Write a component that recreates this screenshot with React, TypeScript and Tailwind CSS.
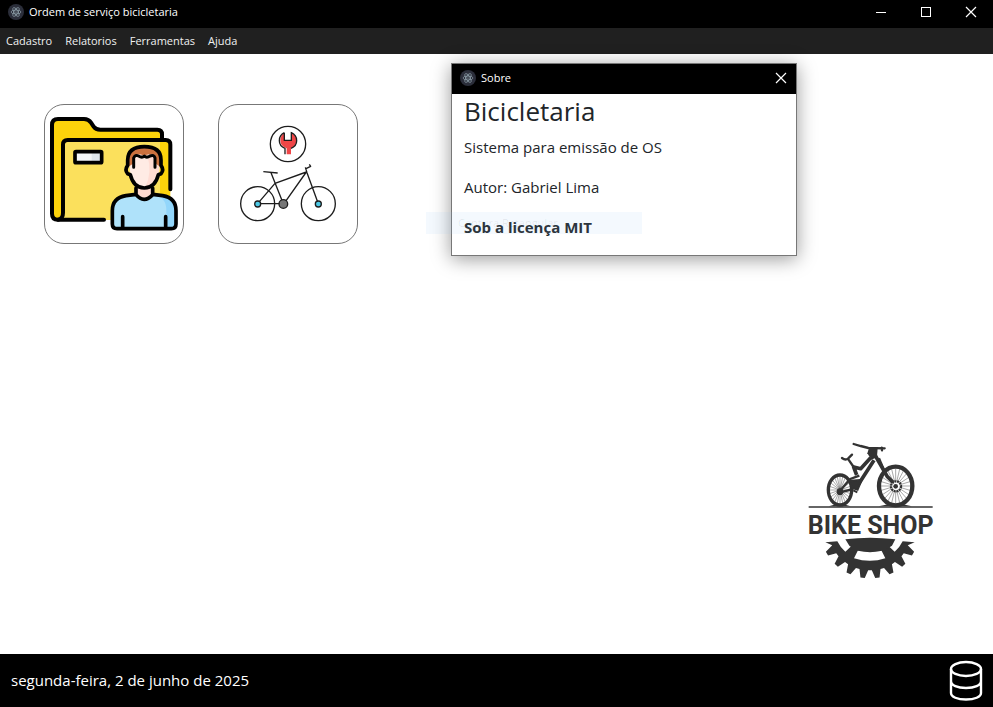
import type { ReactNode } from "react";

const MENU = ["Cadastro", "Relatorios", "Ferramentas", "Ajuda"];

function polar(cx: number, cy: number, r: number, deg: number) {
  const a = (deg * Math.PI) / 180;
  return `${(cx + r * Math.cos(a)).toFixed(1)} ${(cy + r * Math.sin(a)).toFixed(1)}`;
}

function chainringPath() {
  const cx = 210;
  const cy = 280;
  const parts: string[] = ["M76 322", `L${polar(cx, cy, 124, 156)}`];
  for (let i = 0; i < 8; i += 1) {
    const mid = 149.5 - i * 17;
    parts.push(`L${polar(cx, cy, 126, mid + 6)}`);
    parts.push(`L${polar(cx, cy, 150, mid + 2.5)}`);
    parts.push(`L${polar(cx, cy, 150, mid - 2.5)}`);
    parts.push(`L${polar(cx, cy, 126, mid - 6)}`);
  }
  parts.push(`L${polar(cx, cy, 124, 24)}`);
  parts.push("L344 322L308 319Q299 338 284 350L252 320H168L136 350Q121 338 112 319Z");
  return parts.join("");
}

function AppIcon() {
  return (
    <svg viewBox="0 0 16 16" className="size-4 shrink-0" aria-hidden="true">
      <circle cx="8" cy="8" r="8" fill="#2b2e3a" />
      <g fill="none" stroke="#b5cdd6" strokeWidth="0.7" opacity="0.75">
        <ellipse cx="8" cy="8" rx="5" ry="2" />
        <ellipse cx="8" cy="8" rx="5" ry="2" transform="rotate(60 8 8)" />
        <ellipse cx="8" cy="8" rx="5" ry="2" transform="rotate(120 8 8)" />
      </g>
      <circle cx="8" cy="8" r="0.6" fill="#b5cdd6" />
    </svg>
  );
}

function CloseGlyph() {
  return (
    <svg viewBox="0 0 12 12" className="size-3" aria-hidden="true">
      <path d="M1 1 11 11M11 1 1 11" stroke="#fff" strokeWidth="1.2" fill="none" />
    </svg>
  );
}

function WindowButton({ label, children }: { label: string; children: ReactNode }) {
  return (
    <button type="button" aria-label={label} className="flex w-[45px] items-center justify-center">
      {children}
    </button>
  );
}

function CustomersIcon() {
  return (
    <svg viewBox="15 15 414 414" className="size-full" aria-hidden="true">
      <path d="M36 350V75Q36 57 54 57H132Q146 57 153 68L161 80Q167 89 181 89H352Q366 89 366 103V120H378Q391 120 391 134V359H54Q36 359 36 350Z" fill="#fdd30b" />
      <path d="M69 134Q69 120 83 120H360V359H62Q69 350 69 340Z" fill="#fbe05c" />
      <g fill="none" stroke="#000" strokeWidth="12" strokeLinecap="round" strokeLinejoin="round">
        <path d="M192 359H54Q36 359 36 341V75Q36 57 54 57H132Q146 57 153 68L161 80Q167 89 181 89H352Q366 89 366 103V116" />
        <path d="M54 359Q69 357 69 338V134Q69 120 83 120H377Q391 120 391 134V268" />
      </g>
      <rect x="105" y="155" width="80" height="33" rx="2" fill="#f3f6f8" />
      <path d="M155 155H185V188H155Z" fill="#dfe6ec" />
      <rect x="105" y="155" width="80" height="33" rx="3" fill="none" stroke="#000" strokeWidth="11" />
      <path d="M217 384V327Q219 292 260 286L288 282H338L366 286Q406 292 408 327V372Q408 386 394 386H231Q217 386 217 372Z" fill="#afe2fa" />
      <path d="M340 283L366 286Q406 292 408 327V372Q408 386 394 386H379V330Q379 292 340 283Z" fill="#92d6fb" />
      <path d="M288 250V284Q312 310 338 284V250Z" fill="#ffd9cf" />
      <path d="M269 202V170Q280 145 313 143Q352 145 358 175V205Q355 264 313 264Q272 262 269 202Z" fill="#ffebe4" />
      <path d="M322 165Q352 168 358 185V205Q355 258 315 263Q338 220 322 165Z" fill="#ffdcd3" />
      <path d="M263 202V178Q264 141 313 141Q363 141 363 180V202L345 190L343 166Q326 158 312 168Q298 158 285 168L281 190Z" fill="#cb713f" />
      <g fill="none" stroke="#000" strokeWidth="11" strokeLinecap="round" strokeLinejoin="round">
        <path d="M288 264V284Q312 312 338 284V264M288 283L258 287Q217 294 217 332V372Q217 386 231 386H394Q408 386 408 372V332Q408 294 368 287L338 283M248 350V384M377 350V384" />
        <path d="M263 196V180Q264 140 313 140Q363 140 363 180V196M263 196Q253 210 263 221L271 224Q280 263 313 264Q346 263 355 224L363 221Q373 210 363 196" />
      </g>
      <path d="M281 202V174Q285 163 296 168Q306 175 313 168Q320 175 330 168Q342 163 345 174V202" fill="none" stroke="#000" strokeWidth="9" strokeLinecap="round" strokeLinejoin="round" />
    </svg>
  );
}

function ServiceOrderIcon() {
  return (
    <svg viewBox="15 15 414 414" className="size-full" aria-hidden="true">
      <g fill="none" stroke="#1d1d1d" strokeWidth="4">
        <circle cx="222" cy="132" r="53" />
        <circle cx="131" cy="311" r="51" />
        <circle cx="313" cy="311" r="51" />
        <path d="M131 311 183 250 277 216 210 311H131M171 218 208 311M274 202 279 218 313 311M276 206 290 199 286 193M148 215 191 219" strokeLinejoin="round" />
      </g>
      <circle cx="131" cy="312" r="9" fill="#4cc9e6" stroke="#1d1d1d" strokeWidth="4" />
      <circle cx="313" cy="312" r="9" fill="#4cc9e6" stroke="#1d1d1d" strokeWidth="4" />
      <circle cx="208" cy="312" r="13" fill="#777" stroke="#1d1d1d" strokeWidth="4" />
      <path d="M211 98V121H232V98Q247 105 247 122Q247 138 231 145V163H218V145Q199 138 199 122Q199 105 211 98Z" fill="#ef4647" />
      <path d="M211 98V121H232V98Q248 105 248 122Q248 138 231 145M213 163V145Q196 138 196 122Q196 105 211 98" fill="none" stroke="#1d1d1d" strokeWidth="4" />
    </svg>
  );
}

function spokes(cx: number, cy: number, rx: number, ry: number) {
  return Array.from({ length: 24 }, (_, i) => {
    const a = (i * Math.PI) / 12;
    return `M${cx} ${cy}L${(cx + rx * Math.cos(a)).toFixed(1)} ${(cy + ry * Math.sin(a)).toFixed(1)}`;
  }).join("");
}

function ShopLogo() {
  return (
    <svg viewBox="0 0 420 450" className="h-[150px] w-[140px]" role="img" aria-label="Bike Shop">
      <g fill="none" stroke="#333">
        <ellipse cx="120" cy="165" rx="35" ry="45" strokeWidth="10" />
        <ellipse cx="287" cy="153" rx="50" ry="58" strokeWidth="13" />
        <path d={spokes(120, 165, 32, 42)} strokeWidth="1.3" />
        <path d={spokes(287, 153, 46, 52)} strokeWidth="1.3" />
        <path d="M161 27 182 33 205 39 254 40M245 38 246 46" strokeWidth="7" strokeLinecap="round" />
        <path d="M126 69Q136 77 144 71L156 59M145 73 161 96" strokeWidth="7" strokeLinecap="round" strokeLinejoin="round" />
        <path d="M218 48 262 125 287 150" strokeWidth="11" />
        <path d="M236 70 252 108" strokeWidth="9" />
        <path d="M212 68 182 101 161 96 170 120M222 76 174 150" strokeWidth="11" strokeLinejoin="round" />
        <path d="M120 167 151 132 178 122M120 172 160 162" strokeWidth="7" />
        <path d="M153 137 186 134 173 165 154 158Z" fill="#333" strokeWidth="5" />
        <path d="M160 166 172 172" strokeWidth="6" />
      </g>
      <circle cx="288" cy="154" r="15" fill="#fff" stroke="#333" strokeWidth="7" strokeDasharray="6 2" />
      <circle cx="287" cy="154" r="7" fill="#333" />
      <circle cx="120" cy="170" r="10" fill="#333" />
      <path d="M208 36 233 37 231 67 214 74 202 55Z" fill="#333" />
      <path d="M86 214Q120 202 152 214ZM236 214Q287 198 336 214Z" fill="#333" />
      <path d="M26 216H398" stroke="#333" strokeWidth="5" />
      <text x="212" y="296" textAnchor="middle" fontSize="75" fontWeight="700" fill="#333" className="font-[Roboto,'Liberation_Sans',sans-serif]">
        BIKE SHOP
      </text>
      <path d={chainringPath()} fill="#333" />
      <path d="M174 346Q210 354 244 346L256 370Q210 385 162 370Z" fill="#fff" />
      <path d="M136 313Q210 304 286 313L276 332Q262 340 255 346Q210 357 165 346Q158 338 148 332Z" fill="#333" />
    </svg>
  );
}

function DatabaseIcon() {
  return (
    <svg viewBox="0 0 34 41" className="h-[41px] w-[34px]" fill="none" stroke="#fff" strokeWidth="2.4" role="img" aria-label="Banco de dados">
      <ellipse cx="17" cy="9" rx="15" ry="7" />
      <path d="M2 9V33C2 37 8.500 39.500 17 39.500S32 37 32 33V9M2 21C2 25.500 8.500 28 17 28S32 25.500 32 21" />
    </svg>
  );
}

function AboutWindow() {
  return (
    <section
      role="dialog"
      aria-labelledby="about-title"
      className="absolute left-[451px] top-[63px] w-[346px] border border-[#777] bg-white text-[#212529] shadow-[0_3px_18px_rgba(0,0,0,0.4)]"
    >
      <header className="flex h-[30px] items-center bg-black pb-0.5 pl-2 text-white">
        <AppIcon />
        <span id="about-title" className="ml-[5px] grow text-[11px]">Sobre</span>
        <button type="button" aria-label="Fechar" className="flex h-full w-[30px] items-center justify-center">
          <CloseGlyph />
        </button>
      </header>
      <div className="px-3 pb-4 text-[15px] leading-6">
        <h1 className="mb-[7px] text-[26px] font-medium leading-[34px]">Bicicletaria</h1>
        <p className="mb-4">Sistema para emissão de OS</p>
        <p className="mb-4">Autor: Gabriel Lima</p>
        <p className="font-bold">Sob a licença MIT</p>
      </div>
    </section>
  );
}

export default function App() {
  return (
    <div className="relative flex min-h-screen flex-col bg-white font-['Open_Sans','Noto_Sans',sans-serif]">
      <header className="flex h-7 items-stretch bg-black text-white">
        <div className="flex grow items-center pb-1 pl-2">
          <AppIcon />
          <span className="ml-[5px] text-[11px]">Ordem de serviço bicicletaria</span>
        </div>
        <div className="flex pb-1">
          <WindowButton label="Minimizar">
            <span className="h-px w-2.5 bg-white" />
          </WindowButton>
          <WindowButton label="Maximizar">
            <span className="size-2.5 border border-white" />
          </WindowButton>
          <WindowButton label="Fechar janela">
            <CloseGlyph />
          </WindowButton>
        </div>
      </header>
      <nav className="flex h-[26px] items-center gap-[13px] bg-[#202020] px-1.5 text-[11px] text-[#f0f0f0]">
        {MENU.map((item) => (
          <button key={item} type="button">{item}</button>
        ))}
      </nav>
      <main className="flex grow flex-col justify-between">
        <div className="flex gap-[34px] px-11 pt-[50px]">
          <button type="button" aria-label="Clientes" className="size-[140px] rounded-[20px] border border-[#777]">
            <CustomersIcon />
          </button>
          <button type="button" aria-label="Ordem de serviço" className="size-[140px] rounded-[20px] border border-[#777]">
            <ServiceOrderIcon />
          </button>
        </div>
        <div className="flex justify-end pb-[69px] pr-[53px]">
          <ShopLogo />
        </div>
      </main>
      <footer className="flex h-[53px] items-center justify-between bg-black pl-[11px] pr-[10px] text-[15px] text-white">
        <p>segunda-feira, 2 de junho de 2025</p>
        <DatabaseIcon />
      </footer>
      <AboutWindow />
      <div className="pointer-events-none absolute left-[426px] top-[212px] flex h-[22px] w-[216px] items-center bg-[#90c8f6]/10 pl-8 text-[11px] text-black/8">
        Captura Retangular
      </div>
    </div>
  );
}
